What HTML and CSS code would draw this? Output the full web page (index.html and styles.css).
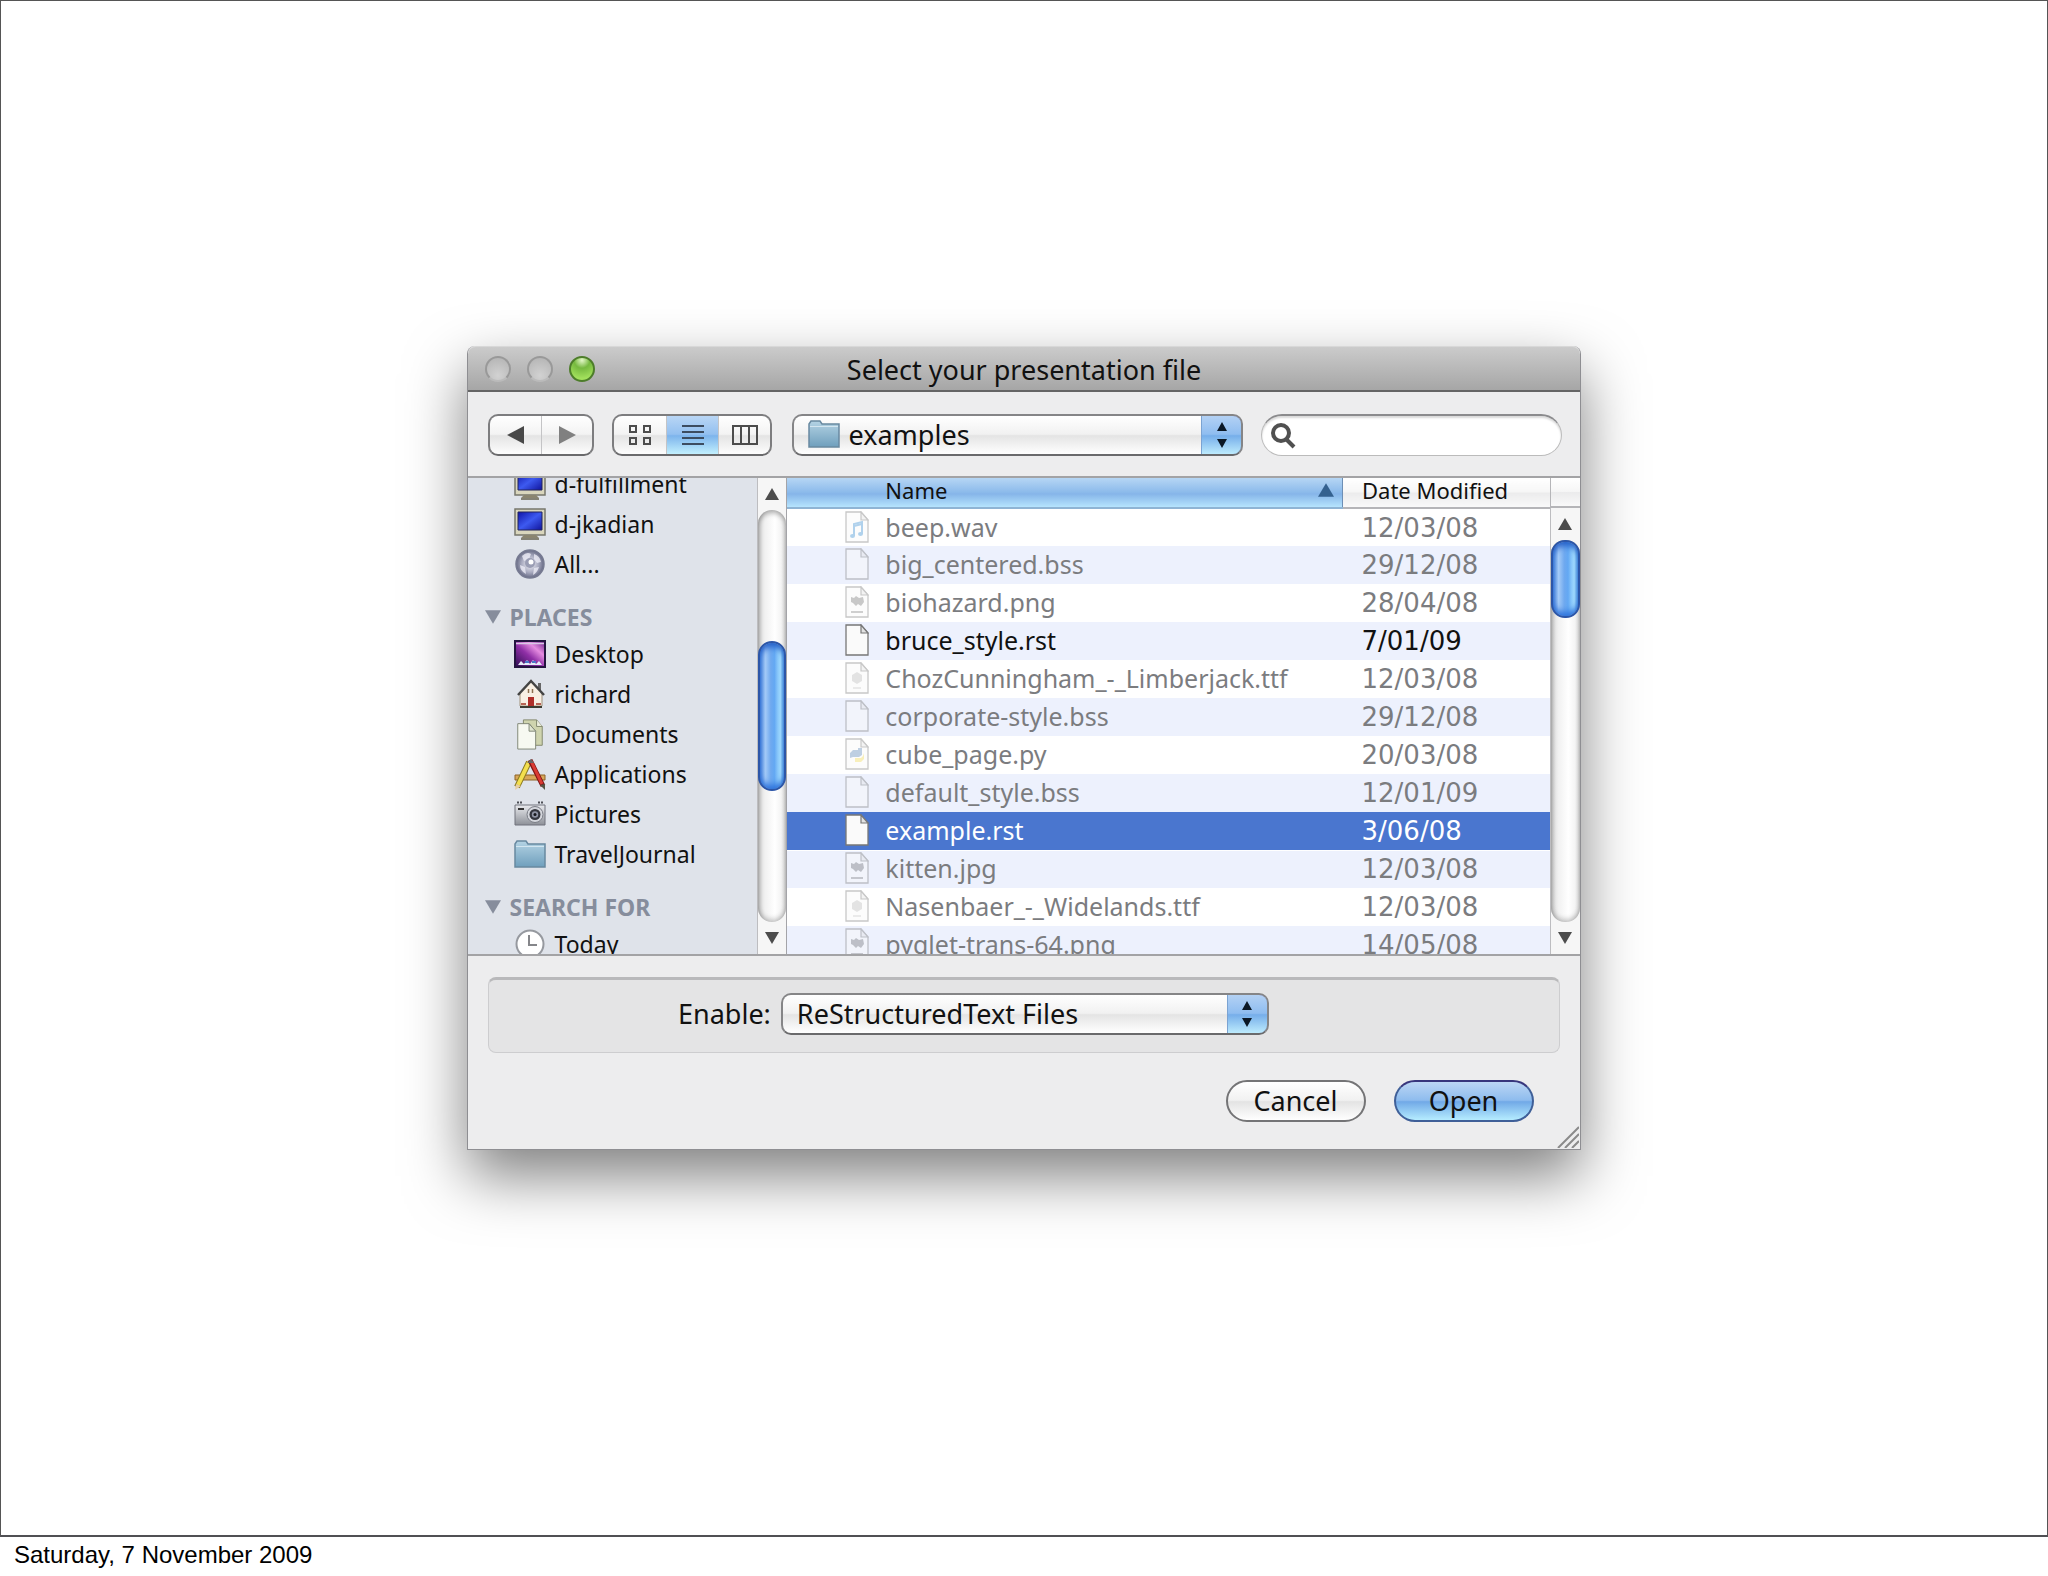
FILE: index.html
```html
<!DOCTYPE html>
<html lang="en">
<head>
    <meta charset="UTF-8">
    <meta name="viewport" content="width=device-width, initial-scale=1.0">
    <title>Select your presentation file</title>
    <link rel="stylesheet" href="styles.css">
</head>
<body>
    <!-- shared icons -->
    <svg class="defs" width="0" height="0" aria-hidden="true">
        <defs>
            <linearGradient id="gFolder" x1="0" y1="0" x2="0" y2="1">
                <stop offset="0" stop-color="#b4d3e4"/><stop offset="1" stop-color="#6f9fbd"/>
            </linearGradient>
            <linearGradient id="gScreen" x1="0" y1="0" x2="1" y2="1">
                <stop offset="0" stop-color="#0f14a8"/><stop offset=".5" stop-color="#3d5af0"/><stop offset="1" stop-color="#10139c"/>
            </linearGradient>
            <linearGradient id="gDesk" x1="0" y1="1" x2="1" y2="0">
                <stop offset="0" stop-color="#2b0c50"/><stop offset=".45" stop-color="#8f2fa6"/><stop offset=".7" stop-color="#e58be0"/><stop offset="1" stop-color="#6a1c86"/>
            </linearGradient>
            <linearGradient id="gCam" x1="0" y1="0" x2="0" y2="1">
                <stop offset="0" stop-color="#e9eaee"/><stop offset="1" stop-color="#8d9098"/>
            </linearGradient>
            <radialGradient id="gGlobe">
                <stop offset="0" stop-color="#f4f4fa"/><stop offset=".6" stop-color="#a9abc0"/><stop offset="1" stop-color="#666a84"/>
            </radialGradient>
        </defs>
        <symbol id="folder" viewBox="0 0 32 28">
            <path d="M1 27V4l2-3h9l2 3h17v23z" fill="url(#gFolder)" stroke="#6889a0" stroke-width="1.5"/>
            <path d="M2 6.500h28" stroke="#d3e6f0"/>
        </symbol>
        <symbol id="computer" viewBox="0 0 32 32">
            <path d="M1 1h30v26H1z" fill="#d9d6bd" stroke="#77776c" stroke-width="1.500"/>
            <path d="M4 4h24v18H4z" fill="url(#gScreen)" stroke="#22245c"/>
            <path d="M10 27h12l3 3H7z" fill="#8a8570"/><path d="M7 31h18" stroke="#66624e" stroke-width="1.500"/>
        </symbol>
        <symbol id="globe" viewBox="0 0 32 32">
            <circle cx="16" cy="16" r="14" fill="url(#gGlobe)" stroke="#777b92" stroke-width="1.500"/>
            <path d="M8 8q5-5 9-2l-2 5-5 2zM20 6q6 2 7 8l-4 1-3-4zM6 17l5 2 1 7q-6-3-6-9zM20 20l5-1q-2 6-6 8z" fill="#ececf6" opacity=".8"/>
            <circle cx="16" cy="15" r="5" fill="#9a9db4"/><circle cx="17" cy="14" r="2.500" fill="#fff"/>
        </symbol>
        <symbol id="desktop" viewBox="0 0 32 28">
            <path d="M1 1h30v26H1z" fill="url(#gDesk)" stroke="#241440" stroke-width="2"/>
            <path d="M2 3.500h28" stroke="#d9c8e6" stroke-width="1.500"/>
            <path d="M4 25l3-4 3 3 3-4 3 4 3-4 3 4 3-3 3 4z" fill="#e6ebf8"/>
            <path d="M11 22h4M18 22h4" stroke="#4a78c8" stroke-width="2"/>
        </symbol>
        <symbol id="home" viewBox="0 0 32 32">
            <path d="M24 5h3v9l-3-3z" fill="#666"/>
            <path d="M6 15L17 4l11 11v13H6z" fill="#f8efe3" stroke="#a2927d"/>
            <path d="M4 17L17 3l13 14" fill="none" stroke="#444" stroke-width="2.500"/>
            <path d="M14 19h6v9h-6z" fill="#ae2f2a"/><path d="M14.500 11v4M18.500 11v4" stroke="#8c7050" stroke-width="1.500"/>
            <path d="M6 29h22" stroke="#3c3c32" stroke-width="2"/>
            <path d="M7 26h5M22 26h5" stroke="#b86454" stroke-width="2"/>
        </symbol>
        <symbol id="documents" viewBox="0 0 32 34">
            <path d="M9 2h14l6 7v20H9z" fill="#cfd4ae" stroke="#80856a"/>
            <path d="M23 2v7h6" fill="#eceedd" stroke="#80856a"/>
            <path d="M3 6h12l7 8v19H3z" fill="#f7f9f1" stroke="#7e8474"/>
            <path d="M15 6v8h7z" fill="#dfe4cf" stroke="#7e8474"/>
        </symbol>
        <symbol id="apps" viewBox="0 0 32 32">
            <path d="M1 17h30v5H1z" fill="#d8a75a" stroke="#8d6227"/>
            <path d="M15 4L3 29" stroke="#8b7a22" stroke-width="6"/><path d="M15 4L4 27" stroke="#f3df4e" stroke-width="4"/>
            <path d="M1 32l1-6 5 2z" fill="#e8cfa2"/>
            <path d="M16 2l13 26" stroke="#7d1515" stroke-width="5"/><path d="M17 3l11 23" stroke="#db3b33" stroke-width="3"/>
            <path d="M26 27l5-1v6z" fill="#554"/><path d="M13 5l4-4 3 4z" fill="#666"/>
        </symbol>
        <symbol id="camera" viewBox="0 0 32 26">
            <path d="M1 4h30v20H1z" fill="url(#gCam)" stroke="#70737c"/>
            <path d="M3 1.500h6M24 1.500h6" stroke="#4c4e55" stroke-width="2" stroke-dasharray="2 1"/>
            <path d="M4 8h6" stroke="#333" stroke-width="2"/>
            <circle cx="21" cy="13.500" r="8" fill="#d4d6dc" stroke="#7a7d86"/>
            <circle cx="21" cy="13.500" r="5.500" fill="#34363e"/><circle cx="21" cy="13.500" r="3.200" fill="#8f94a4"/><circle cx="21" cy="13.500" r="1.500" fill="#16171c"/>
        </symbol>
        <symbol id="clock" viewBox="0 0 32 32">
            <circle cx="16" cy="16" r="13.500" fill="#fff" stroke="#96999f" stroke-width="2"/>
            <path d="M15 7v10h8" fill="none" stroke="#85868a" stroke-width="2"/>
        </symbol>
        <symbol id="doc" viewBox="0 0 24 32">
            <path d="M1 1h15l7 8v22H1z" fill="#fafafa" stroke="#777" stroke-width="1.300"/>
            <path d="M16 1v8h7z" fill="#e2e2e2" stroke="#777" stroke-width="1.200"/>
        </symbol>
        <symbol id="audio" viewBox="0 0 24 32">
            <use href="#doc"/>
            <path d="M9 25V13l8-2v12" fill="none" stroke="#3b8fd0" stroke-width="2"/><path d="M9 15l8-2" stroke="#3b8fd0" stroke-width="2"/>
            <ellipse cx="7.500" cy="25" rx="2.500" ry="2" fill="#3b8fd0"/><ellipse cx="15.500" cy="23" rx="2.500" ry="2" fill="#3b8fd0"/>
        </symbol>
        <symbol id="image" viewBox="0 0 24 32">
            <use href="#doc"/>
            <path d="M6 11l3 1 2-2 3 2 4-1 1 5-3 4-3-2-2 2-3-3-2-1z" fill="#777"/>
            <path d="M6 26h12" stroke="#888" stroke-width="2"/>
        </symbol>
        <symbol id="font" viewBox="0 0 24 32">
            <use href="#doc"/>
            <path d="M12 10l5 3v6l-5 3-5-3v-6z" fill="#bbb"/><path d="M8 26h8" stroke="#ccc" stroke-width="2"/>
        </symbol>
        <symbol id="python" viewBox="0 0 24 32">
            <use href="#doc"/>
            <path d="M5 20v-5l3-3h5v-2h4v7l-3 2H8z" fill="#5f88b8"/><path d="M19 15v6l-3 3h-6v-4h6l2-2z" fill="#efd957"/>
        </symbol>
        <symbol id="tri" viewBox="0 0 14 12"><path d="M7 0l7 12H0z" fill="currentColor"/></symbol>
        <symbol id="triDown" viewBox="0 0 14 12"><path d="M0 0h14L7 12z" fill="currentColor"/></symbol>
        <symbol id="updown" viewBox="0 0 12 26"><path d="M6 0l5 9H1zM6 26l5-9H1z" fill="#0b1826"/></symbol>
    </svg>

    <main class="slide">
        <form class="dialog">
            <header class="title-bar">
                <div class="lights">
                    <button type="button" class="light" aria-label="Close"></button>
                    <button type="button" class="light" aria-label="Minimize"></button>
                    <button type="button" class="light green" aria-label="Zoom"></button>
                </div>
                <h1 class="title">Select your presentation file</h1>
            </header>

            <div class="toolbar">
                <div class="segments">
                    <button type="button" aria-label="Back"><svg width="18" height="18" viewBox="0 0 18 18"><path d="M0 9L17 0v18z" fill="#484848"/></svg></button>
                    <button type="button" aria-label="Forward"><svg width="18" height="18" viewBox="0 0 18 18"><path d="M18 9L1 0v18z" fill="#808080"/></svg></button>
                </div>
                <div class="segments views">
                    <button type="button" aria-label="Icon view"><svg width="24" height="22" viewBox="0 0 24 22"><path d="M2 2h6v6H2zM16 2h6v6h-6zM2 14h6v6H2zM16 14h6v6h-6z" fill="none" stroke="#4c4c4c" stroke-width="2"/></svg></button>
                    <button type="button" class="on" aria-label="List view"><svg width="24" height="22" viewBox="0 0 24 22"><path d="M1 2h22M1 8h22M1 14h22M1 20h22" stroke="#3c4c60" stroke-width="2"/></svg></button>
                    <button type="button" aria-label="Column view"><svg width="28" height="22" viewBox="0 0 28 22"><path d="M2 2h24v18H2zM10 2v18M18 2v18" fill="none" stroke="#4c4c4c" stroke-width="2"/></svg></button>
                </div>
                <div class="popup path">
                    <svg class="popup-icon" width="32" height="28"><use href="#folder"/></svg>
                    <select aria-label="Folder"><option>examples</option></select>
                    <span class="popup-arrows"><svg width="12" height="26"><use href="#updown"/></svg></span>
                </div>
                <div class="search">
                    <svg width="26" height="26" viewBox="0 0 26 26"><circle cx="11" cy="10" r="8" fill="none" stroke="#505050" stroke-width="4"/><path d="M16 16l8 8" stroke="#505050" stroke-width="4"/></svg>
                    <input type="text" aria-label="Search">
                </div>
            </div>

            <div class="browser">
                <nav class="sidebar">
                    <ul class="places">
                        <li><svg width="32" height="32"><use href="#computer"/></svg>d-fulfillment</li>
                        <li><svg width="32" height="32"><use href="#computer"/></svg>d-jkadian</li>
                        <li><svg width="32" height="32"><use href="#globe"/></svg>All...</li>
                        <li class="group"><svg width="16" height="14"><use href="#triDown"/></svg>PLACES</li>
                        <li><svg width="32" height="28"><use href="#desktop"/></svg>Desktop</li>
                        <li><svg width="32" height="32"><use href="#home"/></svg>richard</li>
                        <li><svg width="32" height="32"><use href="#documents"/></svg>Documents</li>
                        <li><svg width="32" height="32"><use href="#apps"/></svg>Applications</li>
                        <li><svg width="32" height="26"><use href="#camera"/></svg>Pictures</li>
                        <li><svg width="32" height="28"><use href="#folder"/></svg>TravelJournal</li>
                        <li class="group"><svg width="16" height="14"><use href="#triDown"/></svg>SEARCH FOR</li>
                        <li><svg width="32" height="32"><use href="#clock"/></svg>Today</li>
                    </ul>
                </nav>
                <div class="scrollbar">
                    <button type="button" aria-label="Scroll up"><svg width="14" height="12"><use href="#tri"/></svg></button>
                    <div class="track"><div class="thumb middle"></div></div>
                    <button type="button" aria-label="Scroll down"><svg width="14" height="12"><use href="#triDown"/></svg></button>
                </div>

                <div class="files">
                    <table>
                        <thead>
                            <tr>
                                <th class="name sorted"><div>Name <svg width="16" height="14"><use href="#tri"/></svg></div></th>
                                <th class="date">Date Modified</th>
                            </tr>
                        </thead>
                        <tbody>
                            <tr><td class="name"><div><svg><use href="#audio"/></svg>beep.wav</div></td><td class="date">12/03/08</td></tr>
                            <tr><td class="name"><div><svg><use href="#doc"/></svg>big_centered.bss</div></td><td class="date">29/12/08</td></tr>
                            <tr><td class="name"><div><svg><use href="#image"/></svg>biohazard.png</div></td><td class="date">28/04/08</td></tr>
                            <tr class="enabled"><td class="name"><div><svg><use href="#doc"/></svg>bruce_style.rst</div></td><td class="date">7/01/09</td></tr>
                            <tr><td class="name"><div><svg><use href="#font"/></svg>ChozCunningham_-_Limberjack.ttf</div></td><td class="date">12/03/08</td></tr>
                            <tr><td class="name"><div><svg><use href="#doc"/></svg>corporate-style.bss</div></td><td class="date">29/12/08</td></tr>
                            <tr><td class="name"><div><svg><use href="#python"/></svg>cube_page.py</div></td><td class="date">20/03/08</td></tr>
                            <tr><td class="name"><div><svg><use href="#doc"/></svg>default_style.bss</div></td><td class="date">12/01/09</td></tr>
                            <tr class="enabled selected"><td class="name"><div><svg><use href="#doc"/></svg>example.rst</div></td><td class="date">3/06/08</td></tr>
                            <tr><td class="name"><div><svg><use href="#image"/></svg>kitten.jpg</div></td><td class="date">12/03/08</td></tr>
                            <tr><td class="name"><div><svg><use href="#font"/></svg>Nasenbaer_-_Widelands.ttf</div></td><td class="date">12/03/08</td></tr>
                            <tr><td class="name"><div><svg><use href="#image"/></svg>pyglet-trans-64.png</div></td><td class="date">14/05/08</td></tr>
                        </tbody>
                    </table>
                </div>
                <div class="files-side">
                    <div class="corner"></div>
                    <div class="scrollbar">
                        <button type="button" aria-label="Scroll up"><svg width="14" height="12"><use href="#tri"/></svg></button>
                        <div class="track"><div class="thumb top"></div></div>
                        <button type="button" aria-label="Scroll down"><svg width="14" height="12"><use href="#triDown"/></svg></button>
                    </div>
                </div>
            </div>

            <footer class="footer">
                <div class="filter">
                    <label for="enable">Enable:</label>
                    <div class="popup type">
                        <select id="enable"><option>ReStructuredText Files</option></select>
                        <span class="popup-arrows"><svg width="12" height="26"><use href="#updown"/></svg></span>
                    </div>
                </div>
                <div class="actions">
                    <button type="button" class="btn">Cancel</button>
                    <button type="submit" class="btn default">Open</button>
                </div>
                <svg class="grip" width="22" height="22" viewBox="0 0 22 22"><path d="M1 22L22 1M8 22L22 8M15 22l7-7" stroke="#8a8a8a" stroke-width="2"/></svg>
            </footer>
        </form>
    </main>
    <p class="stamp">Saturday, 7 November 2009</p>
</body>
</html>
```
FILE: styles.css
```css
* {
    box-sizing: border-box;
}
body {
    margin: 0;
    min-height: 100vh;
    display: flex;
    flex-direction: column;
    background: #fff;
    color: #111;
    font-family: "Noto Sans", "Open Sans", sans-serif;
    font-size: 27px;
}
button,
input,
select {
    font: inherit;
    color: inherit;
    margin: 0;
    padding: 0;
    border: none;
    background: none;
}
svg {
    display: block;
    flex: none;
}
.defs {
    position: absolute;
}
.slide {
    flex: 1;
    display: flex;
    align-items: center;
    justify-content: center;
    padding-bottom: 40px;
    border: 1px solid #555;
    border-bottom: 2px solid #505054;
}
.stamp {
    margin: 0;
    height: 39px;
    padding: 0 14px;
    font-family: "Liberation Sans", Arial, sans-serif;
    font-size: 24px;
    line-height: 35px;
    color: #000;
}

/* window */
.dialog {
    width: 54.4%;
    min-width: 1080px;
    border: 1px solid #8e8e92;
    border-top: none;
    border-radius: 8px 8px 0 0;
    background: #ededee;
    box-shadow: 0 26px 60px rgba(0, 0, 0, 0.5);
}
.title-bar {
    height: 46px;
    display: grid;
    grid-template-columns: 1fr auto 1fr;
    align-items: center;
    border-top: 1px solid #d8d8d8;
    border-bottom: 2px solid #656565;
    border-radius: 8px 8px 0 0;
    background: linear-gradient(#cbcbcb, #a6a6a6);
}
.lights {
    display: flex;
    gap: 16px;
    padding-left: 17px;
}
.light {
    width: 26px;
    height: 26px;
    border: 2px solid #999;
    border-bottom-color: #bbb;
    border-radius: 50%;
    background: radial-gradient(circle at 50% 80%, #d2d2d2, #b2b2b2);
}
.light.green {
    border-color: #4d7d2a;
    background: radial-gradient(circle at 50% 10%, #e4f8c8 0, #76b93f 35%, #a2e05c 80%);
}
.title {
    margin: 0;
    padding-top: 3px;
    font-size: 27px;
    font-weight: 400;
    line-height: 40px;
}

/* toolbar */
.toolbar {
    display: flex;
    height: 86px;
    padding: 22px 18px 20px 20px;
    border-bottom: 2px solid #a3a3a5;
}
.segments {
    display: flex;
    height: 42px;
    margin-right: 18px;
    border: 2px solid #7d7d7f;
    border-bottom-color: #6a6a6c;
    border-radius: 10px;
    overflow: hidden;
    background: linear-gradient(#fff, #f3f3f3 48%, #e4e4e4 52%, #fdfdfd);
}
.segments button {
    width: 51px;
    display: flex;
    align-items: center;
    justify-content: center;
}
.segments button + button {
    border-left: 1px solid #c4c4c6;
}
.views {
    margin-right: 20px;
}
.views button {
    width: 52px;
}
.segments .on {
    background: linear-gradient(#b9d6f5, #93c0f0 48%, #7db4ec 52%, #c2f0fe);
}
.popup {
    position: relative;
    height: 42px;
    border: 2px solid #858587;
    border-bottom-color: #6a6a6c;
    border-radius: 10px;
    overflow: hidden;
    background: linear-gradient(#fff, #f1f1f1 48%, #e4e4e4 52%, #fff);
}
.popup select {
    appearance: none;
    width: 100%;
    height: 38px;
    padding: 0 48px 0 14px;
    line-height: 36px;
}
.popup-icon {
    position: absolute;
    left: 14px;
    top: 4px;
}
.popup-arrows {
    position: absolute;
    top: -2px;
    right: -2px;
    bottom: -2px;
    width: 42px;
    display: flex;
    align-items: center;
    justify-content: center;
    border: 2px solid #3f6298;
    border-top-color: #3a3f86;
    border-left: 1px solid #7ba3d2;
    border-radius: 0 10px 10px 0;
    background: linear-gradient(#b3d1f4, #8fbdf0 48%, #76aeea 52%, #bdebfd);
    pointer-events: none;
}
.popup.path {
    flex: 1;
}
.popup.path select {
    padding-left: 54px;
}
.search {
    width: 28%;
    flex: none;
    height: 42px;
    margin-left: 18px;
    padding: 0 16px 0 8px;
    display: flex;
    align-items: center;
    border: 1px solid #bbb;
    border-top: 2px solid #8b8b8d;
    border-radius: 21px;
    background: #fff;
    box-shadow: inset 0 2px 2px rgba(0, 0, 0, 0.15);
}
.search input {
    flex: 1;
    min-width: 0;
    padding-left: 8px;
}

/* browser */
.browser {
    display: flex;
    height: 478px;
    border-bottom: 2px solid #a3a3a5;
}
.sidebar {
    width: 26%;
    overflow: hidden;
    background: #dfe3ea;
    font-size: 23px;
}
/* scrolled part way down */
.places {
    list-style: none;
    margin: -14px 0 0;
    padding: 0;
}
.places li {
    display: flex;
    align-items: center;
    gap: 8px;
    height: 40px;
    padding-left: 46px;
}
.places .group {
    height: 35px;
    margin-top: 15px;
    padding-left: 17px;
    font-weight: 700;
    color: #868d9c;
}
.scrollbar {
    width: 30px;
    display: flex;
    flex-direction: column;
    border-left: 1px solid #bdbdc0;
    border-right: 1px solid #a4a4a8;
    background: #f6f6f6;
}
.scrollbar button {
    height: 32px;
    display: flex;
    align-items: center;
    justify-content: center;
    color: #4c4c4c;
}
.track {
    flex: 1;
    display: flow-root;
    border-radius: 14px;
    background: linear-gradient(to right, #d5d5d5, #f1f1f1 25%, #fff 60%, #ececec);
    box-shadow: inset 0 3px 5px rgba(0, 0, 0, 0.3), inset 0 -3px 5px rgba(0, 0, 0, 0.2);
}
.thumb {
    border: 2px solid #2c56a8;
    border-radius: 14px;
    background: linear-gradient(to right, #4a86dd, #a5cbf7 22%, #6fa9ef 45%, #63a8f3 60%, #a6e0ff 85%, #5a9ee0);
    box-shadow: inset 0 6px 6px -2px #2560c8, inset 0 -6px 6px -2px #2f74dc;
}
.thumb.middle {
    height: 150px;
    margin-top: 131px;
}
.thumb.top {
    height: 78px;
}
.files {
    flex: 1;
    overflow: hidden;
    background: #fff;
}
table {
    width: 100%;
    table-layout: fixed;
    border-collapse: collapse;
}
th,
td {
    padding: 0;
    text-align: left;
    font-weight: 400;
}
th {
    height: 30px;
    padding-bottom: 5px;
    font-size: 22px;
    line-height: 24px;
    border-bottom: 2px solid #b5b5b8;
    background: linear-gradient(#fff, #f6f6f6 48%, #ebebec 52%, #f9f9f9);
}
th.sorted {
    border-right: 1px solid #6d8fb5;
    border-bottom-color: #8fb4d4;
    background: linear-gradient(#b6d6f4, #8dbbeb 48%, #86b5e9 55%, #b6e4fd);
}
th.sorted div {
    display: flex;
    align-items: center;
    justify-content: space-between;
    padding: 0 8px 0 98px;
}
th.sorted svg {
    color: #34618f;
}
.date {
    width: 207px;
    padding-left: 19px;
}
td {
    height: 38px;
    font-size: 25px;
    line-height: 36px;
    color: #7b7c7f;
}
td.date {
    font-family: "DejaVu Sans", sans-serif;
    font-size: 26px;
}
td.name div {
    display: flex;
    align-items: center;
    gap: 16px;
    padding: 0 0 2px 58px;
    line-height: 34px;
    white-space: nowrap;
}
td svg {
    width: 24px;
    height: 32px;
    opacity: 0.4;
}
tbody tr:nth-child(even) {
    background: #edf1fd;
}
.enabled td {
    color: #111;
}
.enabled svg {
    opacity: 1;
}
tbody .selected {
    background: #4a76cf;
    border-bottom: 1px solid #fff;
}
.selected td {
    color: #fff;
}
.files-side {
    display: flex;
    flex-direction: column;
}
.files-side .scrollbar {
    flex: 1;
    border-right: none;
}
.corner {
    height: 30px;
    border-left: 1px solid #b5b5b8;
    border-bottom: 2px solid #b5b5b8;
    background: linear-gradient(#fff, #f6f6f6 48%, #ebebec 52%, #f9f9f9);
}

/* bottom */
.footer {
    position: relative;
    padding: 21px 20px 27px;
}
.filter {
    display: flex;
    align-items: center;
    gap: 10px;
    height: 76px;
    padding: 0 0 5px 17.6%;
    border: 1px solid #cdcdcf;
    border-top: 3px solid #b9b9bb;
    border-radius: 8px;
    background: #e4e4e5;
}
.popup.type {
    width: 488px;
}
.actions {
    display: flex;
    justify-content: flex-end;
    gap: 28px;
    padding: 27px 26px 0 0;
}
.btn {
    width: 140px;
    height: 42px;
    line-height: 36px;
    border: 2px solid #747476;
    border-radius: 21px;
    background: linear-gradient(#fff, #f1f1f1 48%, #e3e3e3 52%, #fff);
}
.btn.default {
    border-color: #3f5f98;
    border-top-color: #38367c;
    background: linear-gradient(#bcd6f4, #8ebcee 48%, #71a9e7 52%, #b5ecff);
}
.grip {
    position: absolute;
    right: 1px;
    bottom: 1px;
}
```
